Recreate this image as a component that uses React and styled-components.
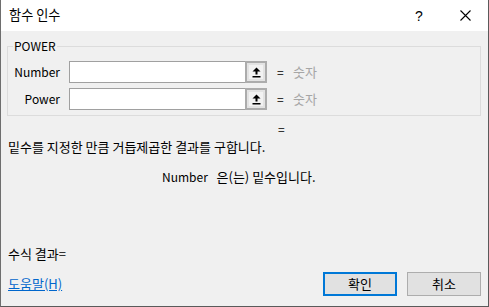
import React from "react";
import styled, { createGlobalStyle } from "styled-components";

const Global = createGlobalStyle`
  html, body { margin: 0; padding: 0; background: #3d5a2a; }
  body { font-family: "Noto Sans CJK KR", "Noto Sans", sans-serif; font-size: 13px; color: #000; }
  * { box-sizing: border-box; }
`;

const Window = styled.div`
  width: 489px;
  height: 307px;
  background: #f0f0f0;
  border-left: 1px solid #6e6e6e;
  border-right: 1px solid #5a5a5a;
  border-bottom: 1px solid #5a5a5a;
  display: flex;
  flex-direction: column;
  overflow: hidden;
`;

const TitleBar = styled.div`
  height: 31px;
  background: #fff;
  display: flex;
  align-items: center;
  padding-left: 8px;
  flex-shrink: 0;
`;

const Title = styled.div`
  flex: 1;
  font-size: 13.2px;
  line-height: 16px;
  padding-bottom: 1px;
`;

const CaptionButton = styled.div`
  width: 46px;
  height: 31px;
  display: flex;
  align-items: center;
  justify-content: center;
  font-family: "Liberation Sans", sans-serif;
  font-size: 14px;
`;

const Body = styled.div`
  flex: 1;
  display: flex;
  flex-direction: column;
  padding: 0 7px 10px 6px;
`;

const Group = styled.fieldset`
  margin: 8px 0 0 0;
  padding: 8px 0 5px 0;
  border: 1px solid #dcdcdc;
  min-width: 0;
  display: flex;
  flex-direction: column;
  gap: 5px;
`;

const Legend = styled.legend`
  margin-left: 5px;
  padding: 0 1px;
  line-height: 14px;
  font-size: 12px;
`;

const ArgRow = styled.div`
  display: flex;
  align-items: center;
  height: 22px;
`;

const ArgLabel = styled.div`
  width: 52px;
  margin-right: 9px;
  text-align: right;
  font-size: 12px;
  line-height: 16px;
  white-space: nowrap;
`;

const ArgInput = styled.div`
  width: 176px;
  height: 22px;
  background: #fff;
  border: 1px solid #a0a0a0;
  border-right: none;
`;

const RefButton = styled.div`
  width: 22px;
  height: 22px;
  border: 2px solid #acacac;
  background: #e3e3e3;
  display: flex;
  align-items: center;
  justify-content: center;
  & > span {
    width: 14px;
    height: 14px;
    background: #f2f2f2;
    display: flex;
    align-items: center;
    justify-content: center;
  }
`;

const Eq = styled.div`
  width: 16px;
  margin-left: 10px;
  font-size: 12px;
  line-height: 16px;
`;

const Hint = styled.div`
  color: #a6a6a6;
  line-height: 16px;
`;

const Line = styled.div`
  line-height: 16px;
  margin-top: ${(p) => p.$mt || 0}px;
  padding-left: ${(p) => p.$pl || 0}px;
  white-space: pre;
`;

const Latin = styled.span`
  font-size: 12px;
`;

const Footer = styled.div`
  margin-top: auto;
  display: flex;
  align-items: center;
  height: 24px;
`;

const HelpLink = styled.a`
  color: #0066cc;
  text-decoration: underline;
  line-height: 16px;
  flex: 1;
  padding-left: 1px;
  cursor: pointer;
`;

const Button = styled.button`
  width: 74px;
  height: 24px;
  margin-left: ${(p) => p.$ml || 0}px;
  background: #e1e1e1;
  border: ${(p) => (p.$default ? "2px solid #0078d7" : "1px solid #adadad")};
  font-family: inherit;
  font-size: 13px;
  color: #000;
  padding: 0;
  line-height: 16px;
`;

const RefIcon = () => (
  <svg width="9" height="11" viewBox="0 0 9 11">
    <polygon points="4.5,0.5 0.5,4.5 8.5,4.5" fill="#000" />
    <rect x="3.5" y="4" width="2" height="3.5" fill="#000" />
    <rect x="0.5" y="9" width="8" height="1.5" fill="#000" />
  </svg>
);

const args = [
  { name: "Number", hint: "숫자" },
  { name: "Power", hint: "숫자" },
];

export default function App() {
  return (
    <>
      <Global />
      <Window>
        <TitleBar>
          <Title>함수 인수</Title>
          <CaptionButton>?</CaptionButton>
          <CaptionButton>
            <svg width="11" height="11" viewBox="0 0 11 11">
              <path d="M0.5 0.5 L10.5 10.5 M10.5 0.5 L0.5 10.5" stroke="#000" strokeWidth="1.1" />
            </svg>
          </CaptionButton>
        </TitleBar>
        <Body>
          <Group>
            <Legend>POWER</Legend>
            {args.map((a) => (
              <ArgRow key={a.name}>
                <ArgLabel>{a.name}</ArgLabel>
                <ArgInput />
                <RefButton>
                  <span>
                    <RefIcon />
                  </span>
                </RefButton>
                <Eq>=</Eq>
                <Hint>{a.hint}</Hint>
              </ArgRow>
            ))}
          </Group>
          <Line $mt={5} $pl={271}>
            <Latin>=</Latin>
          </Line>
          <Line $mt={2} $pl={1}>밑수를 지정한 만큼 거듭제곱한 결과를 구합니다.</Line>
          <Line $mt={14} $pl={155}>
            <Latin>Number</Latin>
            {"   은(는) 밑수입니다."}
          </Line>
          <Line $mt={61} $pl={1}>수식 결과=</Line>
          <Footer>
            <HelpLink>도움말(H)</HelpLink>
            <Button $default>확인</Button>
            <Button $ml={10}>취소</Button>
          </Footer>
        </Body>
      </Window>
    </>
  );
}
